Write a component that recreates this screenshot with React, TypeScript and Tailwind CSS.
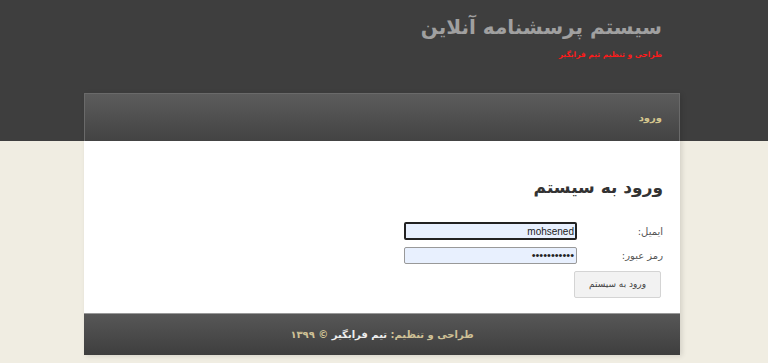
import React from "react";

export default function App() {
  return (
    <div
      dir="rtl"
      className="min-h-[363px] w-full bg-[linear-gradient(#3e3e3e_0,#3e3e3e_141px,#f0ede2_141px)] pt-[14px] pb-[8px]"
      style={{ fontFamily: '"DejaVu Sans", "Noto Sans", sans-serif' }}
    >
      <div className="w-[596px] mr-[88px]">
        <div className="pr-[18px] h-[79px]">
          <h1 className="text-[20px] leading-[26px] text-[#a0a0a0] font-bold">
            سیستم پرسشنامه آنلاین
          </h1>
          <div className="mt-[10px] text-[7.5px] leading-[10px] font-bold text-[#ff1a1a]">
            طراحی و تنظیم تیم فرابگیر
          </div>
        </div>

        <div className="shadow-[2px_1px_5px_rgba(0,0,0,0.12)]">
          <div className="h-[48px] border border-b-0 border-[#6a6a6a] bg-[linear-gradient(#5c5c5c,#434343)] flex items-center pr-[17px]">
            <span className="text-[10px] font-bold text-[#d4c58e]">ورود</span>
          </div>

          <div className="bg-white h-[172px] pr-[17px] pt-[34px]">
            <h2 className="text-[17px] leading-[24px] font-bold text-[#333]">
              ورود به سیستم
            </h2>
            <div className="mt-[23px] flex flex-col">
              <div className="flex items-center h-[18px]">
                <label className="w-[86px] text-[10px] text-[#555]">ایمیل:</label>
                <div className="w-[173px] h-[18px] bg-[#e8f0fe] border-2 border-[#222] rounded-[2px] flex items-center px-[1px]">
                  <span
                    className="text-[10px] text-[#222]"
                    dir="ltr"
                    style={{ fontFamily: '"Liberation Sans", Arial, sans-serif' }}
                  >
                    mohsened
                  </span>
                </div>
              </div>
              <div className="flex items-center h-[17px] mt-[7px]">
                <label className="w-[86px] text-[10px] text-[#555]">رمز عبور:</label>
                <div className="w-[173px] h-[17px] bg-[#e8f0fe] border border-[#999] rounded-[2px] flex items-center px-[2px]">
                  <span
                    className="text-[11px] leading-none text-[#222]"
                    dir="ltr"
                    style={{ fontFamily: '"Liberation Sans", Arial, sans-serif' }}
                  >
                    •••••••••••
                  </span>
                </div>
              </div>
              <div className="mt-[6px] pr-[2px]">
                <button className="w-[87px] h-[27px] bg-[#f2f2f2] border border-[#d4d4d4] rounded-[2px] text-[9px] text-[#444]">
                  ورود به سیستم
                </button>
              </div>
            </div>
          </div>

          <div className="h-[42px] border-t border-[#999] bg-[linear-gradient(#575757,#3e3e3e)] flex items-center justify-center text-[10px] font-bold text-[#cfc196]">
            <span>
              طراحی و تنظیم: <span className="text-[#eeeeee]">تیم فرابگیر</span> © ۱۳۹۹
            </span>
          </div>
        </div>
      </div>
    </div>
  );
}
